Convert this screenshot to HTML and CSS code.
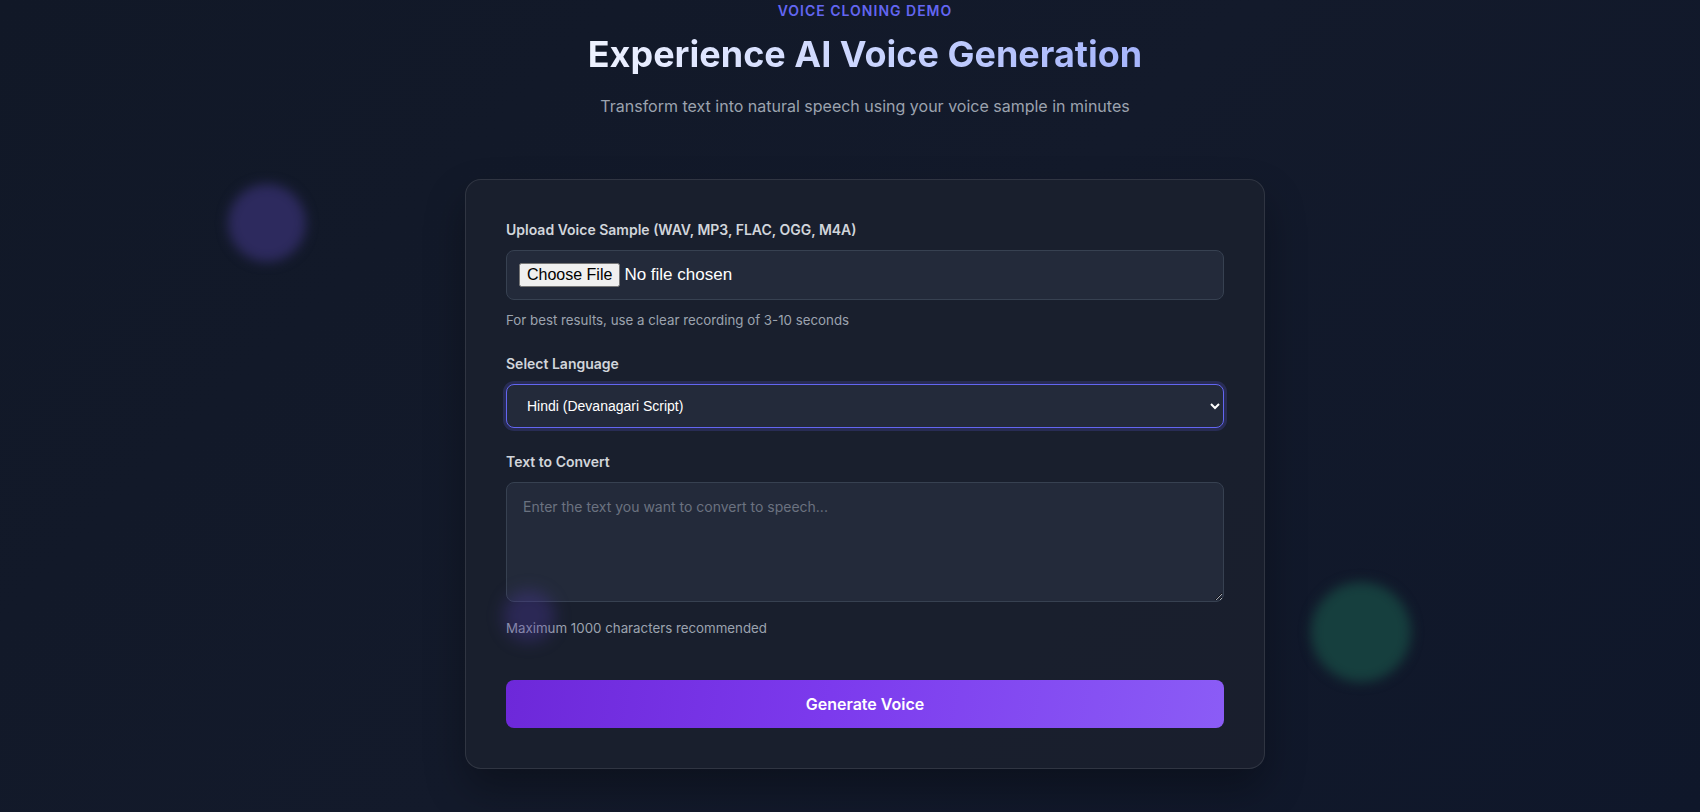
FILE: index.html
```html
<!DOCTYPE html>
<html lang="en">
<head>
<meta charset="utf-8">
<title>Voice Cloning Demo</title>
<link rel="stylesheet" href="styles.css">
</head>
<body>
<div class="blob blob-purple"></div>
<div class="blob blob-green"></div>
<div class="blob blob-small"></div>
<main class="page">
  <header class="hero">
    <p class="eyebrow">Voice Cloning Demo</p>
    <h1 class="title">Experience AI Voice Generation</h1>
    <p class="subtitle">Transform text into natural speech using your voice sample in minutes</p>
  </header>
  <form class="card">
    <div class="group">
      <label class="label" for="voice">Upload Voice Sample (WAV, MP3, FLAC, OGG, M4A)</label>
      <input class="file" id="voice" type="file">
      <p class="hint">For best results, use a clear recording of 3-10 seconds</p>
    </div>
    <div class="group">
      <label class="label" for="lang">Select Language</label>
      <select class="select" id="lang">
        <option>Hindi (Devanagari Script)</option>
        <option>English</option>
      </select>
    </div>
    <div class="group">
      <label class="label" for="text">Text to Convert</label>
      <textarea class="textarea" id="text" placeholder="Enter the text you want to convert to speech..."></textarea>
      <p class="hint hint-ta">Maximum 1000 characters recommended</p>
    </div>
    <button class="btn" type="button">Generate Voice</button>
  </form>
</main>
</body>
</html>
```
FILE: styles.css
```css
* { box-sizing: border-box; }
html, body { margin: 0; height: 100%; }
body {
  background: linear-gradient(135deg, #111827 0%, #131a2b 50%, #0f172a 100%);
  font-family: Inter, "Noto Sans", sans-serif;
  color: #e5e7eb;
  overflow: hidden;
  position: relative;
}
.page {
  padding-left: 30px;
  display: flex;
  flex-direction: column;
  align-items: center;
  position: relative;
  z-index: 1;
}
.hero { text-align: center; }
.eyebrow {
  margin: 1px 0 0;
  font-size: 14px;
  line-height: 20px;
  font-weight: 600;
  letter-spacing: 1px;
  text-transform: uppercase;
  color: #6366f1;
}
.title {
  margin: 11px 0 0;
  font-size: 36px;
  line-height: 44px;
  font-weight: 700;
  background: linear-gradient(90deg, #eef2ff 0%, #c7d2fe 55%, #a5b4fc 100%);
  -webkit-background-clip: text;
  background-clip: text;
  color: transparent;
}
.subtitle {
  margin: 18px 0 0;
  font-size: 16px;
  line-height: 24px;
  color: #9ca3af;
}
.card {
  margin-top: 61px;
  width: 800px;
  padding: 40px;
  background: rgba(26, 31, 46, 0.92);
  border: 1px solid rgba(255, 255, 255, 0.1);
  border-radius: 16px;
  box-shadow: 0 20px 40px rgba(0, 0, 0, 0.3);
}
.group { margin-bottom: 24px; }
.label {
  display: block;
  font-size: 14px;
  line-height: 20px;
  font-weight: 600;
  color: #d1d5db;
  margin-bottom: 10px;
}
.file {
  display: block;
  width: 100%;
  height: 50px;
  padding: 12px;
  background: #232a3a;
  border: 1px solid #374151;
  border-radius: 8px;
  color: #ffffff;
  font-size: 17px;
}
.file::file-selector-button { font-size: 16px; }
.hint {
  margin: 10px 0 0;
  font-size: 13.3px;
  line-height: 20px;
  color: #9ca3af;
}
.hint-ta { margin-top: 16px; }
.select {
  display: block;
  width: 100%;
  height: 44px;
  padding: 0 12px 0 16px;
  background: #232a3a;
  border: 1px solid #6366f1;
  border-radius: 8px;
  box-shadow: 0 0 0 3px rgba(99, 102, 241, 0.2);
  color: #ffffff;
  font-family: "Liberation Sans", Arial, sans-serif;
  font-size: 14px;
  outline: none;
}
.textarea {
  display: block;
  width: 100%;
  height: 120px;
  padding: 14px 16px;
  background: #232a3a;
  border: 1px solid #374151;
  border-radius: 8px;
  color: #ffffff;
  font-family: Inter, "Noto Sans", sans-serif;
  font-size: 14px;
  line-height: 20px;
  resize: vertical;
}
.textarea::placeholder { color: #6b7280; }
.btn {
  display: block;
  width: 100%;
  height: 48px;
  margin-top: 42px;
  border: 0;
  border-radius: 8px;
  background: linear-gradient(100deg, #6d28d9 0%, #7c3aed 45%, #8b5cf6 100%);
  color: #ffffff;
  font-family: Inter, "Noto Sans", sans-serif;
  font-size: 16px;
  font-weight: 600;
}
.blob {
  position: absolute;
  border-radius: 50%;
  filter: blur(6px);
}
.blob-purple {
  left: 228px; top: 184px;
  width: 78px; height: 78px;
  background: #2d2a5e;
}
.blob-green {
  left: 1311px; top: 582px;
  width: 100px; height: 100px;
  background: #163f3e;
}
.blob-small {
  left: 503px; top: 590px;
  width: 52px; height: 52px;
  background: rgba(76, 58, 160, 0.35);
  z-index: 2;
  filter: blur(8px);
}
```
